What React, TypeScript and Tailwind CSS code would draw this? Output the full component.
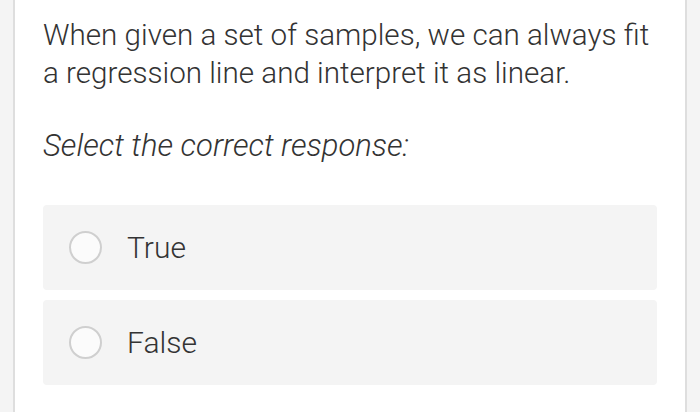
import React, { useState } from "react";

const options = ["True", "False"];

const App: React.FC = () => {
  const [selected, setSelected] = useState<string | null>(null);

  return (
    <div className="flex h-[412px] w-full bg-white font-['Roboto',sans-serif] text-[#333333]">
      {/* left gutter */}
      <div className="w-[15px] shrink-0 border-r-2 border-[#dedede] bg-[#f4f4f4]" />

      <div className="flex-1 px-[28px] pt-[16px]">
        <p className="text-[29.6px] font-light leading-[38px]">
          When given a set of samples, we can always fit
          <br />
          a regression line and interpret it as linear.
        </p>

        <p className="mt-[35px] text-[31px] font-light italic leading-[38px]">
          Select the correct response:
        </p>

        <div className="mt-[40px] flex flex-col gap-[10px]">
          {options.map((opt) => (
            <label
              key={opt}
              onClick={() => setSelected(opt)}
              className="flex h-[85px] cursor-pointer items-center rounded-[4px] bg-[#f4f4f4] pl-[26px]"
            >
              <span className="flex h-[33px] w-[33px] items-center justify-center rounded-full border-2 border-[#cfcfcf] bg-[#fbfbfb]">
                {selected === opt && (
                  <span className="h-[15px] w-[15px] rounded-full bg-[#555]" />
                )}
              </span>
              <span className="ml-[25px] text-[30px] font-light">{opt}</span>
            </label>
          ))}
        </div>
      </div>

      {/* right gutter */}
      <div className="w-[15px] shrink-0 border-l-2 border-[#dedede] bg-[#f4f4f4]" />
    </div>
  );
};

export default App;
